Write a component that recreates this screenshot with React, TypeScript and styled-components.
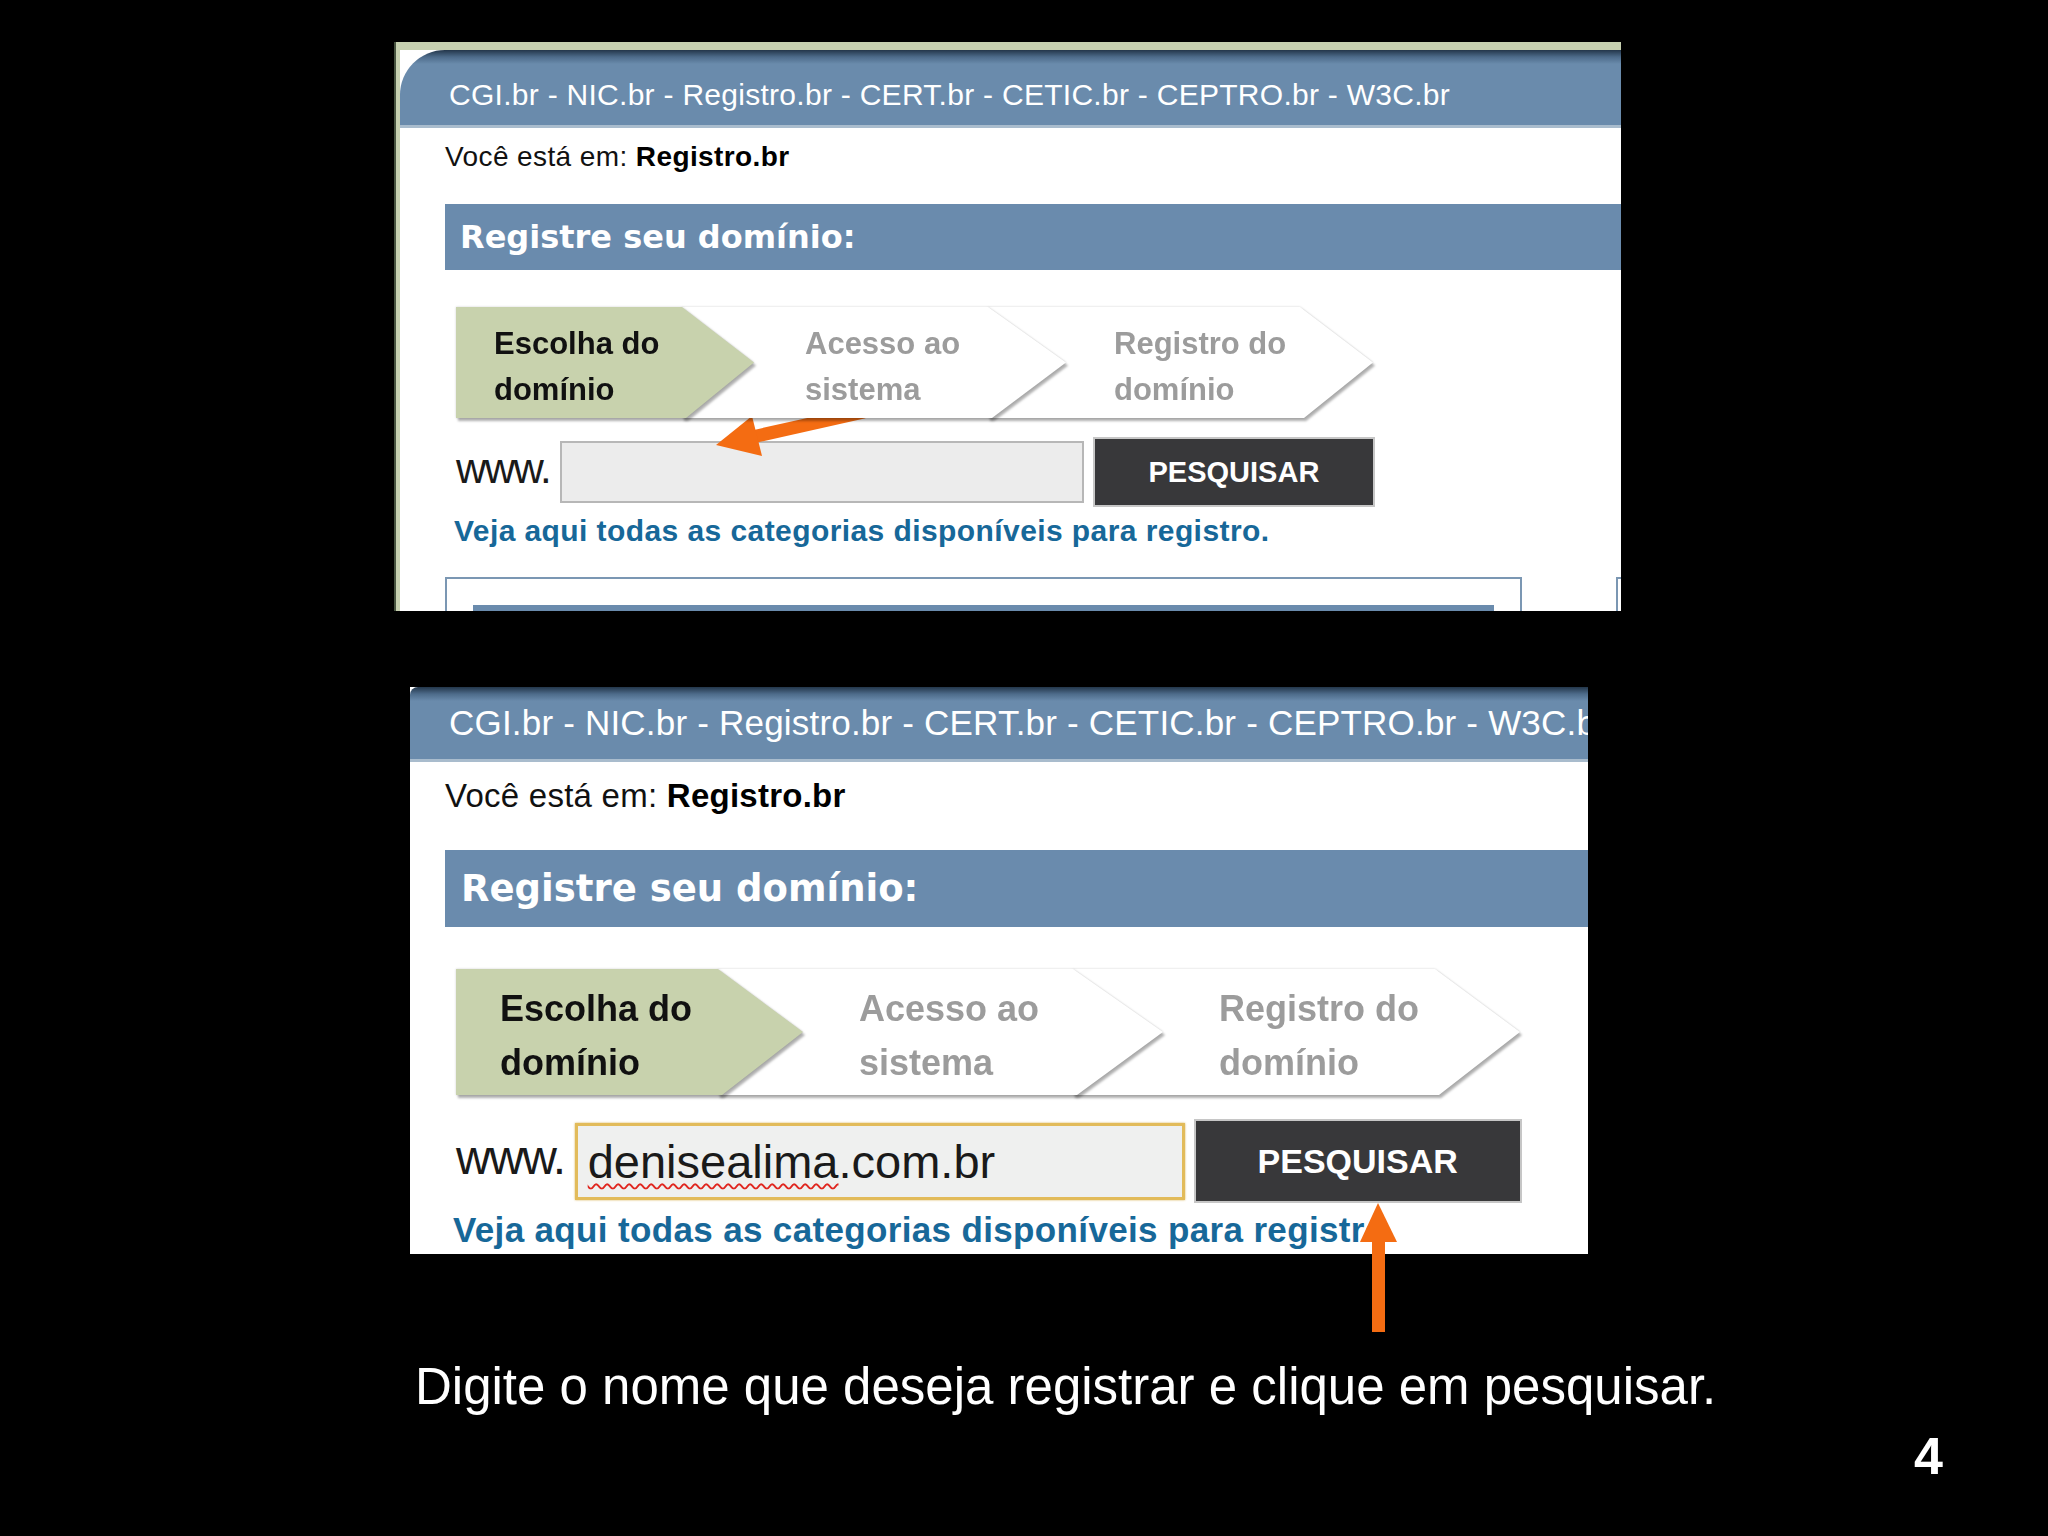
import React from "react";
import styled, { createGlobalStyle } from "styled-components";

const GlobalStyle = createGlobalStyle`
  html, body {
    margin: 0;
    padding: 0;
    background: #000;
  }
  body {
    font-family: "Liberation Sans", Arial, sans-serif;
  }
  * {
    box-sizing: border-box;
  }
`;

type StepConf = { w: number; corner: number; pad: number; overlap: number };

type ShotConf = {
  width: number;
  height: number;
  left: number;
  top: number;
  framed: boolean;
  header: { h: number; radius: number; pad: number; top: number; size: number; spacing: number };
  crumb: { h: number; pad: number; top: number; size: number; spacing: number };
  band: { h: number; left: number; pad: number; size: number };
  steps: { top: number; left: number; h: number; size: number; lh: number; items: StepConf[] };
  search: {
    top: number;
    left: number;
    h: number;
    www: number;
    wwwSpacing: number;
    fieldW: number;
    fieldH: number;
    btnW: number;
    btnH: number;
    btnSize: number;
    value?: string;
  };
  link: { top: number; left: number; size: number; spacing: number };
  tail: boolean;
};

const Slide = styled.div`
  position: relative;
  width: 2048px;
  height: 1536px;
  background: #000;
  display: flex;
  flex-direction: column;
  padding-top: 42px;
  overflow: hidden;
`;

const Panel = styled.div<{ $w: number; $h: number; $left: number; $top: number; $framed: boolean }>`
  width: ${(p) => p.$w}px;
  height: ${(p) => p.$h}px;
  margin-left: ${(p) => p.$left}px;
  margin-top: ${(p) => p.$top}px;
  overflow: hidden;
  flex-shrink: 0;
  background: ${(p) => (p.$framed ? "#c6d0b0" : "#fff")};
  padding: ${(p) => (p.$framed ? "8px 0 0 4px" : "0")};
  border-left: ${(p) => (p.$framed ? "2px solid #46523f" : "none")};
`;

const Page = styled.div`
  background: #fff;
  height: 100%;
  display: flex;
  flex-direction: column;
`;

const Header = styled.div<{ $h: number; $radius: number; $pad: number; $top: number; $size: number; $spacing: number }>`
  height: ${(p) => p.$h}px;
  flex-shrink: 0;
  border-top-left-radius: ${(p) => p.$radius}px;
  background: linear-gradient(to bottom, #23364a 0px, #4d6b8a 7px, #6a8bac 14px, #6a8bac 100%);
  border-bottom: 3px solid #a9bccd;
  padding: ${(p) => p.$top}px 0 0 ${(p) => p.$pad}px;
  color: #fff;
  font-size: ${(p) => p.$size}px;
  letter-spacing: ${(p) => p.$spacing}px;
  line-height: 1;
  white-space: nowrap;
`;

const Crumb = styled.div<{ $h: number; $pad: number; $top: number; $size: number; $spacing: number }>`
  height: ${(p) => p.$h}px;
  flex-shrink: 0;
  padding: ${(p) => p.$top}px 0 0 ${(p) => p.$pad}px;
  font-size: ${(p) => p.$size}px;
  letter-spacing: ${(p) => p.$spacing}px;
  line-height: 1;
  color: #111;
  white-space: nowrap;
  b {
    font-weight: bold;
    color: #000;
  }
`;

const Band = styled.div<{ $h: number; $left: number; $pad: number; $size: number }>`
  height: ${(p) => p.$h}px;
  flex-shrink: 0;
  margin-left: ${(p) => p.$left}px;
  padding-left: ${(p) => p.$pad}px;
  background: #6a8bad;
  display: flex;
  align-items: center;
  color: #fff;
  font-family: "DejaVu Sans", Verdana, sans-serif;
  font-weight: bold;
  font-size: ${(p) => p.$size}px;
  white-space: nowrap;
`;

const StepRow = styled.div<{ $top: number; $left: number; $h: number }>`
  display: flex;
  flex-shrink: 0;
  height: ${(p) => p.$h}px;
  margin: ${(p) => p.$top}px 0 0 ${(p) => p.$left}px;
`;

const StepItem = styled.div<{ $w: number; $overlap: number; $z: number }>`
  position: relative;
  z-index: ${(p) => p.$z};
  width: ${(p) => p.$w}px;
  height: 100%;
  flex-shrink: 0;
  margin-left: ${(p) => -p.$overlap}px;
  filter: drop-shadow(0 0 1px rgba(0, 0, 0, 0.18)) drop-shadow(2px 3px 1px rgba(0, 0, 0, 0.3));
`;

const StepShape = styled.div<{ $corner: number; $pad: number; $active: boolean; $size: number; $lh: number }>`
  height: 100%;
  clip-path: polygon(0 0, ${(p) => p.$corner}px 0, 100% 50%, ${(p) => p.$corner + 4}px 100%, 0 100%);
  background: ${(p) => (p.$active ? "#c8d2ad" : "#fff")};
  color: ${(p) => (p.$active ? "#111" : "#9c9c9c")};
  display: flex;
  align-items: center;
  padding: 8px 0 0 ${(p) => p.$pad}px;
  font-weight: bold;
  font-size: ${(p) => p.$size}px;
  line-height: ${(p) => p.$lh}px;
`;

const SearchRow = styled.div<{ $top: number; $left: number; $h: number }>`
  display: flex;
  align-items: center;
  flex-shrink: 0;
  height: ${(p) => p.$h}px;
  margin: ${(p) => p.$top}px 0 0 ${(p) => p.$left}px;
`;

const Www = styled.span<{ $size: number; $spacing: number }>`
  font-size: ${(p) => p.$size}px;
  line-height: 1;
  letter-spacing: ${(p) => p.$spacing}px;
  color: #1a1a1a;
  margin-right: 10px;
  margin-bottom: 6px;
`;

const Field = styled.div<{ $w: number; $h: number; $focus: boolean }>`
  width: ${(p) => p.$w}px;
  height: ${(p) => p.$h}px;
  background: ${(p) => (p.$focus ? "#eff0ef" : "#ececec")};
  border: ${(p) => (p.$focus ? "3px solid #e2bb5a" : "2px solid #b7b7b7")};
  box-shadow: ${(p) => (p.$focus ? "0 0 2px #d9b458" : "none")};
  display: flex;
  align-items: center;
  padding-left: 10px;
  font-size: 47px;
  line-height: 1;
  letter-spacing: 0;
  color: #1a1a1a;
  white-space: nowrap;
  margin-right: 9px;
`;

const Misspelled = styled.span`
  text-decoration: underline wavy #e0261f;
  text-decoration-thickness: 2px;
  text-underline-offset: 5px;
`;

const SearchButton = styled.button<{ $w: number; $h: number; $size: number }>`
  width: ${(p) => p.$w}px;
  height: ${(p) => p.$h}px;
  background: #38383a;
  border: 2px solid #c6c6c6;
  color: #fff;
  font-family: "Liberation Sans", Arial, sans-serif;
  font-weight: bold;
  font-size: ${(p) => p.$size}px;
  line-height: 1;
  padding: 0;
`;

const Link = styled.a<{ $top: number; $left: number; $size: number; $spacing: number }>`
  display: block;
  margin: ${(p) => p.$top}px 0 0 ${(p) => p.$left}px;
  font-size: ${(p) => p.$size}px;
  letter-spacing: ${(p) => p.$spacing}px;
  line-height: 1;
  font-weight: bold;
  color: #176899;
  text-decoration: none;
  white-space: nowrap;
`;

const TailRow = styled.div`
  display: flex;
  margin: 31px 0 0 45px;
  height: 60px;
  flex-shrink: 0;
`;

const TailBox = styled.div`
  width: 1077px;
  height: 100%;
  border: 2px solid #7b97b3;
  border-bottom: none;
  padding: 26px 26px 0;
`;

const TailBand = styled.div`
  height: 20px;
  background: #6a8bad;
`;

const TailEdge = styled.div`
  flex: 1;
  margin-left: 94px;
  border-left: 2px solid #7b97b3;
  border-top: 2px solid #7b97b3;
`;

const Caption = styled.div`
  margin: 107px 0 0 415px;
  font-size: 51px;
  line-height: 1;
  color: #fff;
  white-space: nowrap;
`;

const PageNumber = styled.div`
  margin: 18px 0 0 1914px;
  font-size: 52px;
  line-height: 1;
  font-weight: bold;
  color: #fff;
`;

const Overlay = styled.svg`
  position: absolute;
  left: 0;
  top: 0;
  pointer-events: none;
`;

const orange = "#f46c12";

const topShot: ShotConf = {
  width: 1227,
  height: 569,
  left: 394,
  top: 0,
  framed: true,
  header: { h: 78, radius: 45, pad: 49, top: 30, size: 30, spacing: 0.28 },
  crumb: { h: 76, pad: 45, top: 15, size: 28, spacing: 0.4 },
  band: { h: 66, left: 45, pad: 15, size: 32 },
  steps: {
    top: 37,
    left: 56,
    h: 111,
    size: 31,
    lh: 46,
    items: [
      { w: 298, corner: 226, pad: 38, overlap: 0 },
      { w: 384, corner: 306, pad: 123, overlap: 72 },
      { w: 385, corner: 312, pad: 126, overlap: 78 },
    ],
  },
  search: {
    top: 19,
    left: 56,
    h: 70,
    www: 42,
    wwwSpacing: -1.6,
    fieldW: 524,
    fieldH: 62,
    btnW: 282,
    btnH: 70,
    btnSize: 29,
  },
  link: { top: 9, left: 54, size: 30, spacing: 0.42 },
  tail: true,
};

const bottomShot: ShotConf = {
  width: 1178,
  height: 567,
  left: 410,
  top: 76,
  framed: false,
  header: { h: 75, radius: 8, pad: 39, top: 18, size: 35, spacing: 0.2 },
  crumb: { h: 88, pad: 35, top: 17, size: 33, spacing: 0.25 },
  band: { h: 77, left: 35, pad: 16, size: 37 },
  steps: {
    top: 42,
    left: 46,
    h: 126,
    size: 36,
    lh: 54,
    items: [
      { w: 347, corner: 262, pad: 44, overlap: 0 },
      { w: 445, corner: 355, pad: 141, overlap: 85 },
      { w: 447, corner: 362, pad: 146, overlap: 90 },
    ],
  },
  search: {
    top: 24,
    left: 46,
    h: 84,
    www: 48,
    wwwSpacing: -1.5,
    fieldW: 610,
    fieldH: 77,
    btnW: 328,
    btnH: 84,
    btnSize: 34,
    value: "denisealima",
  },
  link: { top: 9, left: 43, size: 35, spacing: 0.35 },
  tail: false,
};

const stepLabels = [
  ["Escolha do", "domínio"],
  ["Acesso ao", "sistema"],
  ["Registro do", "domínio"],
];

const Screenshot = ({ c }: { c: ShotConf }) => {
  const s = c.search;
  return (
    <Panel $w={c.width} $h={c.height} $left={c.left} $top={c.top} $framed={c.framed}>
      <Page>
        <Header
          $h={c.header.h}
          $radius={c.header.radius}
          $pad={c.header.pad}
          $top={c.header.top}
          $size={c.header.size}
          $spacing={c.header.spacing}
        >
          CGI.br - NIC.br - Registro.br - CERT.br - CETIC.br - CEPTRO.br - W3C.br
        </Header>
        <Crumb $h={c.crumb.h} $pad={c.crumb.pad} $top={c.crumb.top} $size={c.crumb.size} $spacing={c.crumb.spacing}>
          Você está em: <b>Registro.br</b>
        </Crumb>
        <Band $h={c.band.h} $left={c.band.left} $pad={c.band.pad} $size={c.band.size}>
          Registre seu domínio:
        </Band>
        <StepRow $top={c.steps.top} $left={c.steps.left} $h={c.steps.h}>
          {c.steps.items.map((st, i) => (
            <StepItem key={i} $w={st.w} $overlap={st.overlap} $z={3 - i}>
              <StepShape $corner={st.corner} $pad={st.pad} $active={i === 0} $size={c.steps.size} $lh={c.steps.lh}>
                <span>
                  {stepLabels[i][0]}
                  <br />
                  {stepLabels[i][1]}
                </span>
              </StepShape>
            </StepItem>
          ))}
        </StepRow>
        <SearchRow $top={s.top} $left={s.left} $h={s.h}>
          <Www $size={s.www} $spacing={s.wwwSpacing}>www.</Www>
          <Field $w={s.fieldW} $h={s.fieldH} $focus={!!s.value}>
            {s.value && (
              <>
                <Misspelled>{s.value}</Misspelled>.com.br
              </>
            )}
          </Field>
          <SearchButton $w={s.btnW} $h={s.btnH} $size={s.btnSize}>
            PESQUISAR
          </SearchButton>
        </SearchRow>
        <Link $top={c.link.top} $left={c.link.left} $size={c.link.size} $spacing={c.link.spacing}>
          Veja aqui todas as categorias disponíveis para registro.
        </Link>
        {c.tail && (
          <TailRow>
            <TailBox>
              <TailBand />
            </TailBox>
            <TailEdge />
          </TailRow>
        )}
      </Page>
    </Panel>
  );
};

const App = () => {
  return (
    <>
      <GlobalStyle />
      <Slide>
        <Screenshot c={topShot} />
        <Screenshot c={bottomShot} />
        <Caption>Digite o nome que deseja registrar e clique em pesquisar.</Caption>
        <PageNumber>4</PageNumber>
        <Overlay width={2048} height={1536} viewBox="0 0 2048 1536">
          <line x1={864} y1={412} x2={752} y2={437} stroke={orange} strokeWidth={13} />
          <polygon points="716,445 762,456 752,416" fill={orange} />
          <rect x={1372} y={1238} width={13} height={94} fill={orange} />
          <polygon points="1378,1203 1397,1242 1360,1242" fill={orange} />
        </Overlay>
      </Slide>
    </>
  );
};

export default App;
